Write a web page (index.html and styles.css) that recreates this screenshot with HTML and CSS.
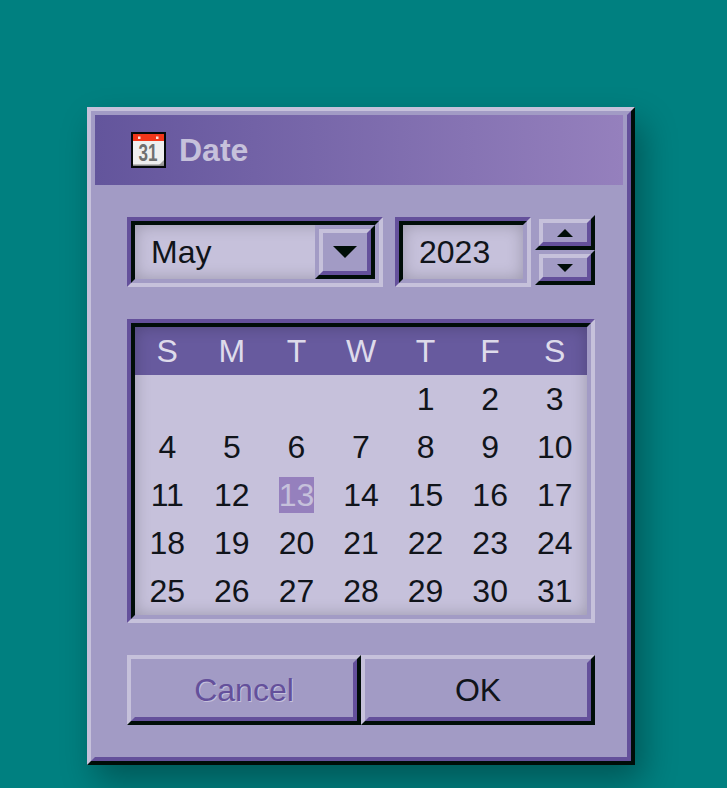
FILE: index.html
```html
<!DOCTYPE html>
<html>
<head>
  <title>Date</title>
  <link rel="stylesheet" href="styles.css">
</head>
<body>
  <div class="window">
    <div class="window-inner">
      <div class="titlebar">
        <svg class="title-icon" viewBox="0 0 35 36" width="35" height="36">
          <rect width="35" height="36" fill="#04090a"/>
          <rect x="2" y="2" width="31" height="32" fill="#efefef"/>
          <rect x="2" y="2" width="31" height="7" fill="#f2361a"/>
          <rect x="7" y="4.500" width="2.500" height="2.500" fill="#fbe3dd"/>
          <rect x="25" y="4.500" width="2.500" height="2.500" fill="#fbe3dd"/>
          <text class="title-icon-num" x="17" y="29" text-anchor="middle" textLength="19" lengthAdjust="spacingAndGlyphs">31</text>
          <path d="M33 28 L27 34 H33 Z" fill="#9f9f9f"/>
          <rect x="2" y="32.500" width="31" height="1.500" fill="#8a8a8a"/>
        </svg>
        <span class="title-text">Date</span>
      </div>

      <div class="content">
        <div class="date-row">
          <div class="sunken month-field">
            <div class="sunken-inner field-inner">
              <span class="field-text">May</span>
              <button class="raised-small drop-btn">
                <span class="raised-small-inner"><span class="arrow-down-big"></span></span>
              </button>
            </div>
          </div>
          <div class="sunken year-field">
            <div class="sunken-inner field-inner">
              <span class="field-text">2023</span>
            </div>
          </div>
          <div class="spin">
            <button class="raised-small spin-btn">
              <span class="raised-small-inner"><span class="arrow-up"></span></span>
            </button>
            <button class="raised-small spin-btn">
              <span class="raised-small-inner"><span class="arrow-down"></span></span>
            </button>
          </div>
        </div>

        <div class="sunken calendar">
          <div class="sunken-inner calendar-inner">
            <div class="week-head">
              <div>S</div><div>M</div><div>T</div><div>W</div><div>T</div><div>F</div><div>S</div>
            </div>
            <div class="days">
              <div></div><div></div><div></div><div></div><div>1</div><div>2</div><div>3</div>
              <div>4</div><div>5</div><div>6</div><div>7</div><div>8</div><div>9</div><div>10</div>
              <div>11</div><div>12</div><div><span class="today">13</span></div><div>14</div><div>15</div><div>16</div><div>17</div>
              <div>18</div><div>19</div><div>20</div><div>21</div><div>22</div><div>23</div><div>24</div>
              <div>25</div><div>26</div><div>27</div><div>28</div><div>29</div><div>30</div><div>31</div>
            </div>
          </div>
        </div>

        <div class="actions">
          <button class="raised action-btn">
            <span class="raised-inner disabled">Cancel</span>
          </button>
          <button class="raised action-btn">
            <span class="raised-inner">OK</span>
          </button>
        </div>
      </div>
    </div>
  </div>
</body>
</html>
```

FILE: styles.css
```css
* {
  box-sizing: border-box;
}
html, body {
  height: 100%;
}
body {
  margin: 0;
  padding: 107px 0 0 87px;
  background: #008080;
  color: #10141a;
  font-family: "Liberation Sans", Arial, sans-serif;
  font-size: 32px;
  overflow: hidden;
}
button {
  display: block;
  margin: 0;
  padding: 0;
  background: #a29bc5;
  color: inherit;
  font: inherit;
}

/* bevels */
.window, .raised {
  border: 4px solid;
  border-color: #c6c1db #000d08 #000d08 #c6c1db;
}
.window-inner, .raised-inner {
  display: flex;
  border: 4px solid;
  border-color: #a29bc5 #64509b #64509b #a29bc5;
}
.sunken {
  border: 4px solid;
  border-color: #64509b #c6c1db #c6c1db #64509b;
}
.sunken-inner {
  position: relative;
  border: 4px solid;
  border-color: #000d08 #a29bc5 #a29bc5 #000d08;
  background: #c6c1db;
}
.sunken-inner::after {
  content: '';
  position: absolute;
  top: 0;
  left: 0;
  right: 0;
  bottom: 0;
  box-shadow: inset 0 0 16px rgba(0,0,0,0.22);
  pointer-events: none;
}
.raised-small {
  border: 4px solid;
  border-color: #a29bc5 #000d08 #000d08 #a29bc5;
}
.raised-small-inner {
  display: flex;
  height: 100%;
  align-items: center;
  justify-content: center;
  border: 4px solid;
  border-color: #c6c1db #64509b #64509b #c6c1db;
}

/* window */
.window {
  width: 548px;
  height: 658px;
  background: #a29bc5;
  box-shadow: 8px 16px 32px rgba(0,0,0,0.32);
}
.window-inner {
  display: block;
  height: 100%;
}
.titlebar {
  display: flex;
  align-items: center;
  height: 70px;
  margin-right: 4px;
  padding-left: 36px;
  background: linear-gradient(to right, #63559c, #9580bd);
}
.title-icon {
  display: block;
  margin-right: 13px;
}
.title-icon-num {
  font-family: "Liberation Sans", Arial, sans-serif;
  font-size: 23px;
  font-weight: bold;
  fill: #707070;
}
.title-text {
  color: #c6c1db;
  font-weight: bold;
}
.content {
  padding: 32px;
}

/* month and year */
.date-row {
  display: flex;
  height: 70px;
}
.month-field {
  width: 256px;
  height: 70px;
}
.year-field {
  width: 136px;
  height: 70px;
  margin-left: 12px;
}
.field-inner {
  display: flex;
  justify-content: space-between;
  height: 100%;
}
.field-text {
  padding-left: 16px;
  line-height: 54px;
}
.drop-btn {
  position: relative;
  z-index: 1;
  width: 60px;
  height: 54px;
}
.spin {
  margin: -2px 0 0 4px;
}
.spin-btn {
  width: 60px;
  height: 35px;
}
.arrow-down-big {
  border-left: 12px solid transparent;
  border-right: 12px solid transparent;
  border-top: 12px solid #000d08;
}
.arrow-up {
  border-left: 8px solid transparent;
  border-right: 8px solid transparent;
  border-bottom: 8px solid #000d08;
}
.arrow-down {
  border-left: 8px solid transparent;
  border-right: 8px solid transparent;
  border-top: 8px solid #000d08;
}

/* calendar */
.calendar {
  width: 468px;
  height: 304px;
  margin-top: 32px;
}
.calendar-inner {
  height: 100%;
}
.week-head, .days {
  display: grid;
  grid-template-columns: repeat(7, 1fr);
  grid-auto-rows: 48px;
  line-height: 48px;
  text-align: center;
}
.week-head {
  background: #675a9e;
  color: #dedbeb;
}
.today {
  background: #9580bd;
  color: #c6c1db;
}

/* buttons */
.actions {
  display: flex;
  margin-top: 32px;
}
.action-btn {
  width: 234px;
  height: 70px;
}
.action-btn .raised-inner {
  height: 100%;
  align-items: center;
  justify-content: center;
}
.disabled {
  color: #64509b;
  text-shadow: 1px 1px 0 #c6c1db;
}
```
